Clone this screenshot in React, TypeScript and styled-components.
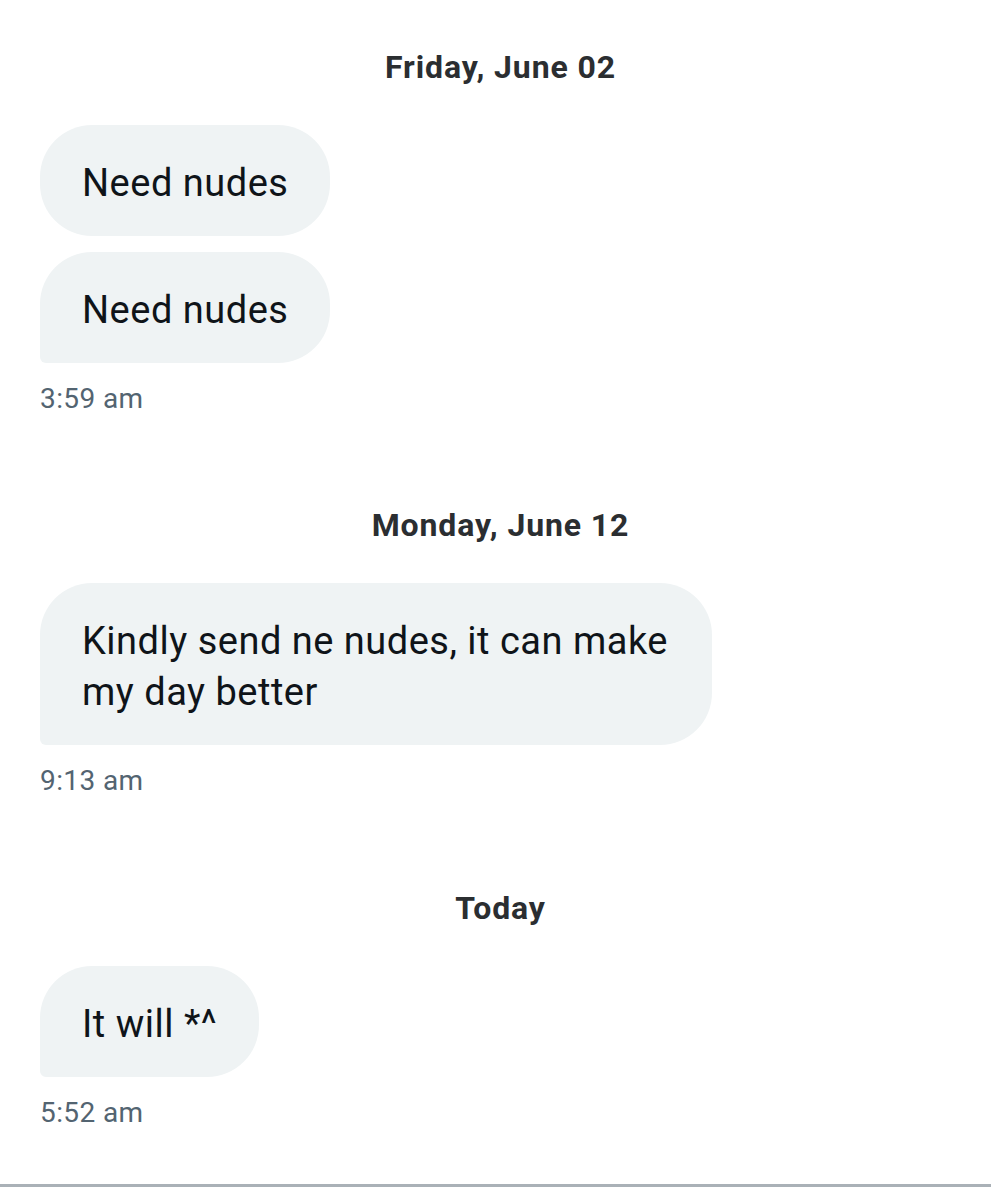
import React from "react";
import styled, { createGlobalStyle } from "styled-components";

const Global = createGlobalStyle`
  html, body { margin: 0; padding: 0; background: #ffffff; }
  body { font-family: Roboto, "Noto Sans", "Liberation Sans", sans-serif; }
`;

const Page = styled.div`
  width: 991px;
  height: 1200px;
  display: flex;
  flex-direction: column;
  background: #ffffff;
  padding-top: 47px;
  box-sizing: border-box;
`;

const Thread = styled.div`
  display: flex;
  flex-direction: column;
  padding: 0 40px;
  flex: 1;
`;

const Section = styled.section<{ $gap: number }>`
  display: flex;
  flex-direction: column;
  margin-top: ${(p) => p.$gap}px;
`;

const DateHeader = styled.div`
  text-align: center;
  padding-left: 10px;
  font-size: 32px;
  line-height: 40px;
  font-weight: 700;
  color: #2b2e31;
  letter-spacing: 0.9px;
`;

const Group = styled.div`
  display: flex;
  flex-direction: column;
  align-items: flex-start;
  gap: 16px;
  margin-top: 38px;
`;

const Bubble = styled.div<{ $last?: boolean }>`
  background: #eff3f4;
  color: #0f1419;
  font-size: 38px;
  line-height: 51px;
  padding: 33px 42px 27px 42px;
  border-radius: 52px;
  border-bottom-left-radius: ${(p) => (p.$last ? "6px" : "52px")};
  max-width: 588px;
  letter-spacing: 0.5px;
`;

const Time = styled.div`
  margin-top: 20px;
  font-size: 28px;
  line-height: 32px;
  color: #536471;
  letter-spacing: 0.4px;
`;

const Divider = styled.div`
  height: 3px;
  background: #aab1b7;
  margin-bottom: 13px;
`;

const data = [
  { date: "Friday, June 02", msgs: ["Need nudes", "Need nudes"], time: "3:59 am", gap: 0 },
  {
    date: "Monday, June 12",
    msgs: ["Kindly send ne nudes, it can make my day better"],
    time: "9:13 am",
    gap: 90,
  },
  { date: "Today", msgs: ["It will *^"], time: "5:52 am", gap: 91 },
];

export default function App() {
  return (
    <Page>
      <Global />
      <Thread>
        {data.map((s) => (
          <Section key={s.date} $gap={s.gap}>
            <DateHeader>{s.date}</DateHeader>
            <Group>
              {s.msgs.map((m, i) => (
                <Bubble key={i} $last={i === s.msgs.length - 1}>
                  {m}
                </Bubble>
              ))}
            </Group>
            <Time>{s.time}</Time>
          </Section>
        ))}
      </Thread>
      <Divider />
    </Page>
  );
}
